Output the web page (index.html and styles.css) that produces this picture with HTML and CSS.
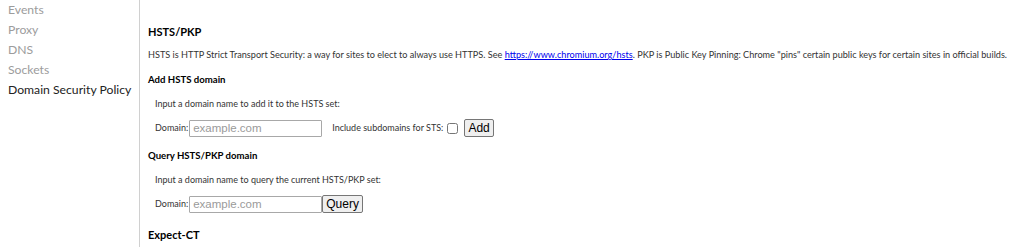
FILE: index.html
```html
<!DOCTYPE html>
<html lang="en">
<head>
    <meta charset="UTF-8">
    <title>net-internals</title>
    <link rel="stylesheet" href="styles.css">
</head>
<body>
    <div class="page">
        <nav class="tabs">
            <a href="#" class="tab">Events</a>
            <a href="#" class="tab">Proxy</a>
            <a href="#" class="tab">DNS</a>
            <a href="#" class="tab">Sockets</a>
            <a href="#" class="tab selected">Domain Security Policy</a>
        </nav>

        <main class="content">
            <h2>HSTS/PKP</h2>
            <p class="intro">HSTS is HTTP Strict Transport Security: a way for sites to elect to always use HTTPS. See <a href="#">https://www.chromium.org/hsts</a>. PKP is Public Key Pinning: Chrome "pins" certain public keys for certain sites in official builds.</p>

            <h3>Add HSTS domain</h3>
            <div class="block">
                <p>Input a domain name to add it to the HSTS set:</p>
                <form class="row">
                    <label>Domain: <input type="text" placeholder="example.com"></label>
                    <label class="sts">Include subdomains for STS: <input type="checkbox"></label>
                    <button type="button">Add</button>
                </form>
            </div>

            <h3>Query HSTS/PKP domain</h3>
            <div class="block">
                <p>Input a domain name to query the current HSTS/PKP set:</p>
                <form class="row">
                    <label>Domain: <input type="text" placeholder="example.com"></label>
                    <button type="button">Query</button>
                </form>
            </div>

            <h2 class="next">Expect-CT</h2>
        </main>
    </div>
</body>
</html>
```

FILE: styles.css
```css
* {
    margin: 0;
    padding: 0;
    box-sizing: border-box;
}

body {
    font-family: 'Lato', sans-serif;
    background-color: white;
    color: #333;
    overflow: hidden;
}

.page {
    display: flex;
    height: 247px;
}

.tabs {
    flex-shrink: 0;
    width: 140px;
    border-right: 1px solid #d0d0d0;
    display: flex;
    flex-direction: column;
    padding-left: 8px;
}

.tab {
    font-size: 12.2px;
    line-height: 20px;
    color: #9c9c9c;
    text-decoration: none;
    white-space: nowrap;
}

.tab.selected {
    color: #222;
}

.content {
    flex: 1;
    min-width: 0;
    padding-left: 8px;
    padding-top: 24px;
}

.content h2 {
    font-size: 11px;
    line-height: 16px;
    font-weight: bold;
    color: #000;
}

.content h2.next {
    margin-top: 14px;
}

.intro {
    font-size: 9.15px;
    line-height: 14px;
    margin-top: 8px;
    white-space: nowrap;
}

.intro a {
    color: #0000ee;
}

.content h3 {
    font-size: 9.6px;
    line-height: 14px;
    font-weight: bold;
    color: #000;
    margin-top: 11px;
}

.block {
    padding-left: 7px;
    font-size: 9px;
    line-height: 14px;
}

.block p {
    margin-top: 10px;
}

.row {
    display: flex;
    align-items: center;
    height: 18px;
    margin-top: 8px;
}

.row label {
    display: flex;
    align-items: center;
}

.row input[type="text"] {
    width: 133px;
    height: 17px;
    margin-left: 1px;
    padding: 0 3px;
    border: 1px solid #a8a8a8;
    border-radius: 1px;
    font-family: 'Liberation Sans', Arial, sans-serif;
    font-size: 11.5px;
}

.row input[type="text"]::placeholder {
    color: #9a9a9a;
}

.row .sts {
    margin-left: 10px;
}

.row input[type="checkbox"] {
    width: 11px;
    height: 11px;
    margin: 0 6px 0 4px;
}

.row button {
    height: 18px;
    padding: 0 3px;
    font-family: 'Liberation Sans', Arial, sans-serif;
    font-size: 12px;
    color: #000;
    background-color: #efefef;
    border: 1px solid #767676;
    border-radius: 2px;
}

.block + h3 {
    margin-top: 12px;
}
```
